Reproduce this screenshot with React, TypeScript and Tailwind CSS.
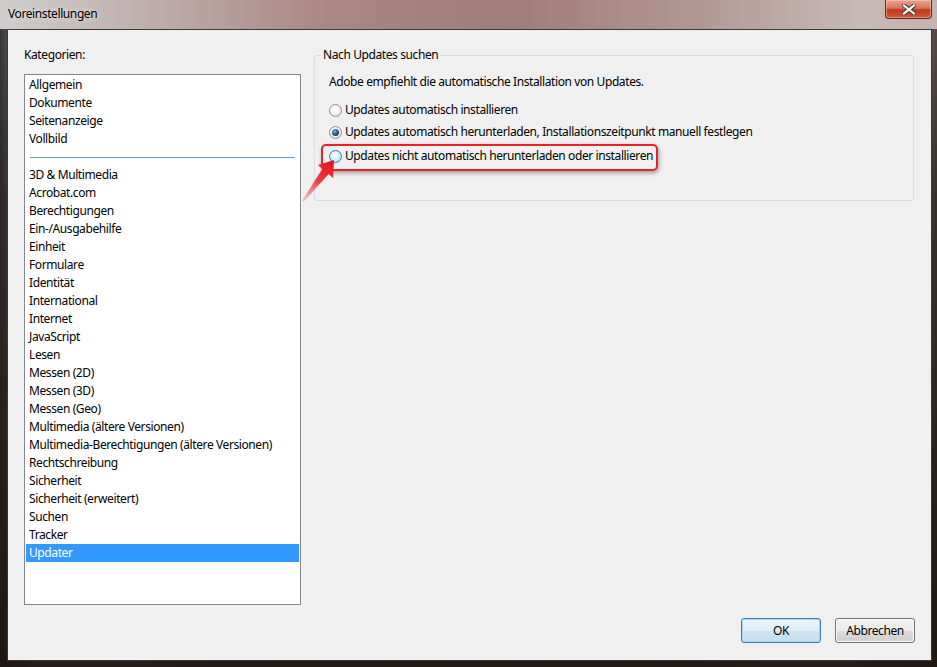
import React from "react";

const categories: (string | null)[] = [
  "Allgemein",
  "Dokumente",
  "Seitenanzeige",
  "Vollbild",
  null,
  "3D & Multimedia",
  "Acrobat.com",
  "Berechtigungen",
  "Ein-/Ausgabehilfe",
  "Einheit",
  "Formulare",
  "Identität",
  "International",
  "Internet",
  "JavaScript",
  "Lesen",
  "Messen (2D)",
  "Messen (3D)",
  "Messen (Geo)",
  "Multimedia (ältere Versionen)",
  "Multimedia-Berechtigungen (ältere Versionen)",
  "Rechtschreibung",
  "Sicherheit",
  "Sicherheit (erweitert)",
  "Suchen",
  "Tracker",
  "Updater",
];

function Radio({ state }: { state: "off" | "on" | "hover" }) {
  const fill =
    state === "hover"
      ? "bg-[radial-gradient(circle_at_45%_40%,#ffffff_0%,#d7efff_45%,#9fd2f3_100%)] border-[#3c7fb1]"
      : "bg-[radial-gradient(circle_at_45%_40%,#ffffff_0%,#f4f4f4_45%,#d5d5d5_100%)] border-[#8e8f8f]";
  return (
    <span className={`flex h-[13px] w-[13px] shrink-0 items-center justify-center rounded-full border ${fill}`}>
      {state === "on" && (
        <span className="h-[7px] w-[7px] rounded-full bg-[radial-gradient(circle_at_40%_35%,#6fb3e6_0%,#1c4f86_55%,#0d2a4d_100%)]" />
      )}
    </span>
  );
}

function CloseButton() {
  return (
    <div className="flex h-[19px] w-[47px] items-center justify-center rounded-b-[4px] border border-t-0 border-[#5a2b22] bg-[linear-gradient(180deg,#e9a595_0%,#d9735c_45%,#c2391d_55%,#d6553a_100%)] shadow-[inset_0_0_0_1px_rgba(255,220,210,0.45)]">
      <svg width="14" height="11" viewBox="0 0 14 11">
        <path d="M2 1.5 L12 9.5 M12 1.5 L2 9.5" stroke="#3d3d3d" strokeWidth="4.2" strokeLinecap="square" />
        <path d="M2 1.5 L12 9.5 M12 1.5 L2 9.5" stroke="#ffffff" strokeWidth="2.2" strokeLinecap="square" />
      </svg>
    </div>
  );
}

function WinButton({ label, focused }: { label: string; focused?: boolean }) {
  return (
    <button
      className={`h-[25px] w-[80px] rounded-[3px] border text-[12px] text-black ${
        focused
          ? "border-[#3c7fb1] bg-[linear-gradient(180deg,#ecf6fc_0%,#e0eef8_50%,#cde4f3_51%,#c4dff1_100%)] shadow-[inset_0_0_0_1px_#a6d7f5]"
          : "border-[#707070] bg-[linear-gradient(180deg,#f2f2f2_0%,#ebebeb_50%,#dddddd_51%,#cfcfcf_100%)] shadow-[inset_0_0_0_1px_#fcfcfc]"
      }`}
    >
      {label}
    </button>
  );
}

export default function App() {
  return (
    <div
      className="flex h-[667px] w-[937px] flex-col overflow-hidden bg-[linear-gradient(180deg,rgba(0,0,0,0)_0%,rgba(30,22,18,0.55)_30%,rgba(28,20,16,0.95)_100%),linear-gradient(90deg,#3b3a3a_0%,#bdb9b8_4%,#ad908d_28%,#a47f7c_50%,#ae8e8b_70%,#c7b7b4_90%,#5a4d45_100%)] text-[12px] tracking-[-0.4px]"
      style={{ fontFamily: '"Noto Sans", "Open Sans", Arial, sans-serif' }}
    >
      {/* title bar */}
      <div className="flex h-[29px] shrink-0 items-start justify-between bg-[linear-gradient(90deg,#cfcdcc_0%,#c3b6b4_12%,#a98784_35%,#a07d7a_55%,#b29895_75%,#c8bab7_92%,#c4b3b0_100%)] pl-[8px] pr-[5px]">
        <span className="mt-[6px] leading-[16px] text-black [text-shadow:0_0_6px_rgba(255,255,255,0.8)]">Voreinstellungen</span>
        <CloseButton />
      </div>

      {/* client area */}
      <div className="mx-[7px] mb-[6px] mr-[5px] flex flex-1 flex-col border border-[#3d3834] bg-[#f0f0f0] pl-[16px] pr-[16px] pt-[17px] pb-[17px]">
        <div className="flex items-start gap-[13px]">
          <div className="flex w-[277px] flex-col">
            <div className="h-[16px] leading-[16px]">Kategorien:</div>
            <div className="mt-[11px] h-[531px] border border-[#828790] bg-white p-[1px]">
              {categories.map((c, i) =>
                c === null ? (
                  <div key={i} className="flex h-[18px] items-center px-[4px]">
                    <div className="h-px w-full bg-[#5b9be0]" />
                  </div>
                ) : (
                  <div
                    key={i}
                    className={`h-[18px] pl-[3px] leading-[18px] ${c === "Updater" ? "bg-[#3399ff] text-white" : "text-black"}`}
                  >
                    {c}
                  </div>
                )
              )}
            </div>
          </div>

          <fieldset className="h-[154px] w-[600px] rounded-[3px] border border-[#d5dfe5] pl-[14px]">
            <legend className="-ml-[8px] px-[2px] leading-[16px]">Nach Updates suchen</legend>
            <div className="mt-[11px] leading-[16px]">Adobe empfiehlt die automatische Installation von Updates.</div>
            <div className="mt-[12px] flex h-[16px] items-center gap-[3px] leading-[16px]">
              <Radio state="off" />
              <span>Updates automatisch installieren</span>
            </div>
            <div className="mt-[6px] flex h-[16px] items-center gap-[3px] leading-[16px]">
              <Radio state="on" />
              <span>Updates automatisch herunterladen, Installationszeitpunkt manuell festlegen</span>
            </div>
            <div className="relative mt-[8px] flex h-[16px] items-center gap-[3px] leading-[16px]">
              <Radio state="hover" />
              <span>Updates nicht automatisch herunterladen oder installieren</span>
              <div className="pointer-events-none absolute left-[-8px] top-[-4px] h-[27px] w-[337px] rounded-[5px] border-2 border-[#e8202a] shadow-[1px_2px_4px_rgba(0,0,0,0.35)]" />
              <svg className="pointer-events-none absolute left-[-29px] top-[3px]" width="40" height="55" viewBox="0 0 40 55">
                <defs>
                  <linearGradient id="arr" x1="34" y1="10" x2="3" y2="50" gradientUnits="userSpaceOnUse">
                    <stop offset="0" stopColor="#e3101c" />
                    <stop offset="0.5" stopColor="#ee3a44" />
                    <stop offset="1" stopColor="#f7a0a6" stopOpacity="0.6" />
                  </linearGradient>
                </defs>
                <polygon
                  points="34,9 18,14 22.3,18.1 2.2,49.4 3.8,50.6 28.7,22.9 33,27"
                  fill="url(#arr)"
                />
              </svg>
            </div>
          </fieldset>
        </div>

        <div className="mt-auto flex justify-end gap-[14px]">
          <WinButton label="OK" focused />
          <WinButton label="Abbrechen" />
        </div>
      </div>
    </div>
  );
}
